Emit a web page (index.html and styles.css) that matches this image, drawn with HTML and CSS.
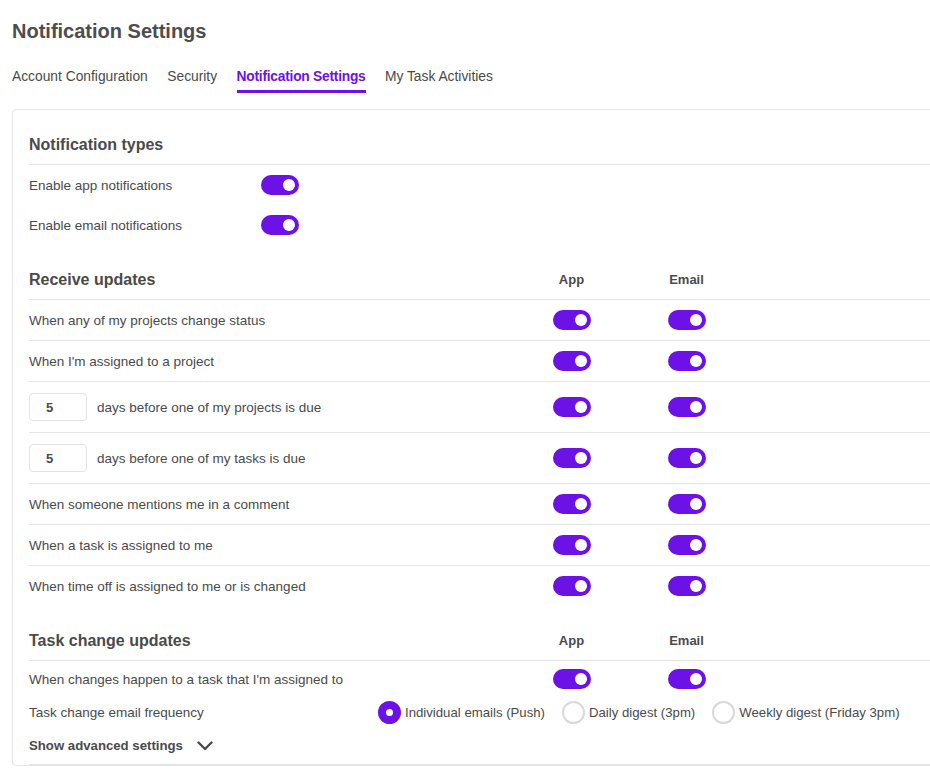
FILE: index.html
```html
<!DOCTYPE html>
<html lang="en">
<head>
  <meta charset="UTF-8" />
  <title>Notification Settings</title>
  <meta name="viewport" content="width=device-width, initial-scale=1.0" />
  <link rel="stylesheet" href="styles.css">
</head>
<body>
  <div class="page">
    <h1 class="page-title">Notification Settings</h1>

    <nav class="tabs">
      <a class="tab">Account Configuration</a>
      <a class="tab">Security</a>
      <a class="tab active">Notification Settings</a>
      <a class="tab">My Task Activities</a>
    </nav>

    <div class="card">
      <!-- notification types -->
      <div class="group-head">
        <h2>Notification types</h2>
      </div>
      <div class="type-row">
        <span>Enable app notifications</span>
        <span class="toggle on"></span>
      </div>
      <div class="type-row">
        <span>Enable email notifications</span>
        <span class="toggle on"></span>
      </div>

      <!-- receive updates -->
      <div class="group-head cols">
        <h2>Receive updates</h2>
        <span class="col-title">App</span>
        <span class="col-title">Email</span>
      </div>
      <div class="row cols">
        <span>When any of my projects change status</span>
        <span class="cell"><span class="toggle on"></span></span>
        <span class="cell"><span class="toggle on"></span></span>
      </div>
      <div class="row cols">
        <span>When I'm assigned to a project</span>
        <span class="cell"><span class="toggle on"></span></span>
        <span class="cell"><span class="toggle on"></span></span>
      </div>
      <div class="row cols tall">
        <span class="with-input"><input class="days" type="text" value="5"> days before one of my projects is due</span>
        <span class="cell"><span class="toggle on"></span></span>
        <span class="cell"><span class="toggle on"></span></span>
      </div>
      <div class="row cols tall">
        <span class="with-input"><input class="days" type="text" value="5"> days before one of my tasks is due</span>
        <span class="cell"><span class="toggle on"></span></span>
        <span class="cell"><span class="toggle on"></span></span>
      </div>
      <div class="row cols">
        <span>When someone mentions me in a comment</span>
        <span class="cell"><span class="toggle on"></span></span>
        <span class="cell"><span class="toggle on"></span></span>
      </div>
      <div class="row cols">
        <span>When a task is assigned to me</span>
        <span class="cell"><span class="toggle on"></span></span>
        <span class="cell"><span class="toggle on"></span></span>
      </div>
      <div class="row cols last">
        <span>When time off is assigned to me or is changed</span>
        <span class="cell"><span class="toggle on"></span></span>
        <span class="cell"><span class="toggle on"></span></span>
      </div>

      <!-- task change updates -->
      <div class="group-head cols">
        <h2>Task change updates</h2>
        <span class="col-title">App</span>
        <span class="col-title">Email</span>
      </div>
      <div class="task-row cols">
        <span>When changes happen to a task that I'm assigned to</span>
        <span class="cell"><span class="toggle on"></span></span>
        <span class="cell"><span class="toggle on"></span></span>
      </div>
      <div class="freq-row">
        <span class="freq-label">Task change email frequency</span>
        <div class="radios">
          <label class="radio-item"><span class="radio checked"></span>Individual emails (Push)</label>
          <label class="radio-item"><span class="radio"></span>Daily digest (3pm)</label>
          <label class="radio-item"><span class="radio"></span>Weekly digest (Friday 3pm)</label>
        </div>
      </div>
      <div class="advanced">
        <span>Show advanced settings</span>
        <svg class="chevron" width="16" height="10" viewBox="0 0 16 10">
          <path d="M1.5 1.5 L8 8 L14.5 1.5" fill="none" stroke="#4a4a4a" stroke-width="2.4" stroke-linecap="round" stroke-linejoin="round"/>
        </svg>
      </div>
    </div>
  </div>
</body>
</html>
```

FILE: styles.css
```css
* {
  box-sizing: border-box;
}

body {
  margin: 0;
  font-family: 'Liberation Sans', Arial, sans-serif;
  font-size: 13.5px;
  color: #4a4a4a;
  background: #fff;
}

.page {
  padding: 19px 0 0 12px;
  overflow: hidden;
}

.page-title {
  margin: 0;
  font-size: 20px;
  line-height: 24px;
  font-weight: 700;
  color: #4d4d4d;
}

.tabs {
  display: flex;
  gap: 19.5px;
  margin-top: 24px;
  font-size: 13.8px;
}

.tab {
  line-height: 20px;
  padding-bottom: 3px;
  border-bottom: 3px solid transparent;
  color: #4a4a4a;
  cursor: pointer;
}

.tab.active {
  color: #6c12e6;
  font-weight: 700;
  letter-spacing: -0.25px;
  border-bottom-color: #6c12e6;
}

.card {
  margin-top: 16px;
  margin-right: -30px;
  border: 1px solid #e6e6e6;
  border-radius: 4px;
  padding-left: 16px;
}

.cols {
  display: grid;
  grid-template-columns: 485px 115px 115px 1fr;
  align-items: center;
}

.group-head {
  padding: 25px 0 9px;
  border-bottom: 1px solid #e6e6e6;
}

.group-head h2 {
  margin: 0;
  font-size: 16px;
  line-height: 20px;
  font-weight: 700;
  color: #4a4a4a;
}

.col-title {
  text-align: center;
  font-size: 13px;
  line-height: 18px;
  font-weight: 700;
  color: #4a4a4a;
}

.type-row {
  display: grid;
  grid-template-columns: 232px auto 1fr;
  align-items: center;
  height: 40px;
}

.row {
  height: 41px;
  border-bottom: 1px solid #e6e6e6;
}

.row.tall {
  height: 51px;
}

.row.last {
  border-bottom: none;
  height: 40px;
}

.cell {
  display: flex;
  justify-content: center;
}

.toggle {
  position: relative;
  display: inline-block;
  width: 38px;
  height: 20px;
  border-radius: 10px;
  background: #ccc;
}

.toggle::after {
  content: '';
  position: absolute;
  top: 4px;
  left: 4px;
  width: 12px;
  height: 12px;
  border-radius: 50%;
  background: #fff;
}

.toggle.on {
  background: #6c12e6;
}

.toggle.on::after {
  left: 22px;
}

.with-input {
  display: flex;
  align-items: center;
  gap: 10px;
}

.days {
  width: 58px;
  height: 28px;
  padding: 0 0 0 16px;
  border: 1px solid #e3e3e3;
  border-radius: 4px;
  font-family: inherit;
  font-size: 13px;
  font-weight: 700;
  color: #4a4a4a;
  outline: none;
}

.task-row {
  height: 36px;
}

.freq-row {
  display: flex;
  align-items: center;
  height: 30px;
}

.freq-label {
  width: 349px;
}

.radios {
  display: flex;
  gap: 17px;
  font-size: 13.2px;
}

.radio-item {
  display: flex;
  align-items: center;
  gap: 4px;
}

.radio {
  position: relative;
  width: 23px;
  height: 23px;
  border-radius: 50%;
  border: 2px solid #d9d9d9;
  background: #fff;
}

.radio.checked {
  border-color: #6c12e6;
  background: #6c12e6;
}

.radio.checked::after {
  content: '';
  position: absolute;
  top: 6px;
  left: 6px;
  width: 7px;
  height: 7px;
  border-radius: 50%;
  background: #fff;
}

.advanced {
  display: flex;
  align-items: center;
  gap: 14px;
  height: 38px;
  border-bottom: 1px solid #e3e3e3;
  font-size: 13.2px;
  font-weight: 700;
  color: #4a4a4a;
  cursor: pointer;
}
```
